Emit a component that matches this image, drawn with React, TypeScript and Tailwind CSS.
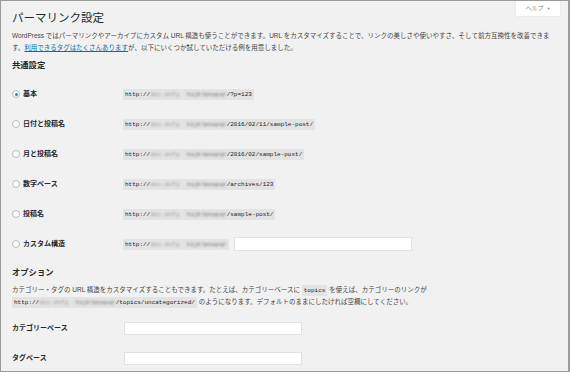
import React from "react";

const FONT = "font-['Liberation_Sans','Noto_Sans_CJK_JP',sans-serif]";

const Blur = ({ tail }: { tail?: string }) => (
  <>
    http://
    <span className="inline-block blur-[1.2px] text-[#9a9a9a]">abc.defg</span>
    <span className="inline-block w-[8px]" />
    <span className="inline-block blur-[1.2px] text-[#6b6b6b]">hijklmnopqr</span>
    {tail}
  </>
);

const Code = ({ children }: { children: React.ReactNode }) => (
  <code className="inline-block h-[11px] px-[2px] bg-[#e3e3e3] font-['Liberation_Mono',monospace] text-[6px] leading-[11px] text-[#222] whitespace-nowrap">
    {children}
  </code>
);

const Radio = ({ checked }: { checked?: boolean }) => (
  <span className="w-[8px] h-[8px] rounded-full border border-[#b4b9be] bg-white flex items-center justify-center shrink-0">
    {checked && <span className="w-[3px] h-[3px] rounded-full bg-[#1e8cbe]" />}
  </span>
);

const rows = [
  { label: "基本", tail: "/?p=123", checked: true },
  { label: "日付と投稿名", tail: "/2016/02/11/sample-post/" },
  { label: "月と投稿名", tail: "/2016/02/sample-post/" },
  { label: "数字ベース", tail: "/archives/123" },
  { label: "投稿名", tail: "/sample-post/" },
];

export default function App() {
  return (
    <div
      className={`${FONT} relative w-[570px] h-[372px] overflow-hidden bg-[#f1f1f1] border-t border-l border-b border-r-2 border-[#9b9b9b] text-[#444]`}
    >
      <div className="absolute top-0 right-[8px] w-[44px] h-[15px] bg-white shadow-[0_0_1px_rgba(0,0,0,0.15)] flex items-center justify-center gap-[3px] text-[6px] text-[#888]">
        <span>ヘルプ</span>
        <span className="text-[4px]">▼</span>
      </div>

      <div className="pl-[11px] pt-[9px]">
        <h1 className="text-[11.5px] leading-[16px] text-[#23282d]">パーマリンク設定</h1>

        <p className="mt-[4px] text-[6.5px] leading-[11.5px] whitespace-nowrap">
          WordPress ではパーマリンクやアーカイブにカスタム URL 構造も使うことができます。URL をカスタマイズすることで、リンクの美しさや使いやすさ、そして前方互換性を改善できま
          <br />
          す。
          <a className="text-[#0073aa] underline">利用できるタグはたくさんあります</a>
          が、以下にいくつか試していただける例を用意しました。
        </p>

        <h2 className="mt-[6px] text-[8.3px] leading-[12px] font-bold text-[#23282d]">共通設定</h2>

        <div className="mt-[8px]">
          {rows.map((r) => (
            <div key={r.label} className="flex items-center h-[30px]">
              <div className="w-[111px] flex items-center gap-[3px]">
                <Radio checked={r.checked} />
                <span className="text-[7px] font-bold text-[#23282d]">{r.label}</span>
              </div>
              <Code>
                <Blur tail={r.tail} />
              </Code>
            </div>
          ))}
          <div className="flex items-center h-[30px]">
            <div className="w-[111px] flex items-center gap-[3px]">
              <Radio />
              <span className="text-[7px] font-bold text-[#23282d]">カスタム構造</span>
            </div>
            <Code>
              <Blur />
            </Code>
            <input
              type="text"
              className="ml-[5px] w-[178px] h-[14px] bg-white border border-[#e2e2e2] outline-none"
            />
          </div>
        </div>

        <h2 className="mt-[7px] text-[8.3px] leading-[12px] font-bold text-[#23282d]">オプション</h2>

        <p className="mt-[6px] text-[6.5px] leading-[12px] whitespace-nowrap">
          カテゴリー・タグの URL 構造をカスタマイズすることもできます。たとえば、カテゴリーベースに <Code>topics</Code> を使えば、カテゴリーのリンクが
          <br />
          <Code>
            <Blur tail="/topics/uncategorized/" />
          </Code>{" "}
          のようになります。デフォルトのままにしたければ空欄にしてください。
        </p>

        <div className="mt-[5px]">
          {["カテゴリーベース", "タグベース"].map((l) => (
            <div key={l} className="flex items-center h-[30px]">
              <span className="w-[112px] text-[7px] font-bold text-[#23282d]">{l}</span>
              <input
                type="text"
                className="w-[178px] h-[13px] bg-white border border-[#e2e2e2] outline-none"
              />
            </div>
          ))}
        </div>
      </div>
    </div>
  );
}
